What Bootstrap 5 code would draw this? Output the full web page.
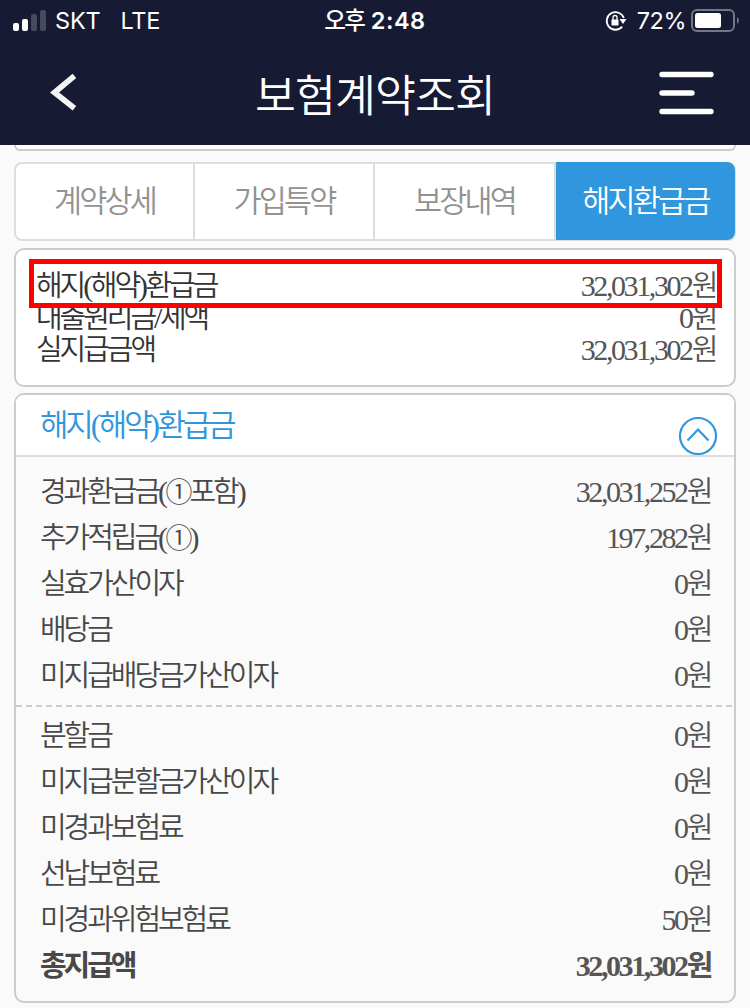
<!DOCTYPE html>
<html lang="ko">
<head>
<meta charset="utf-8">
<meta name="viewport" content="width=device-width, initial-scale=1">
<title>보험계약조회</title>
<link href="https://cdn.jsdelivr.net/npm/bootstrap@5.3.0/dist/css/bootstrap.min.css" rel="stylesheet">
<style>
  body { background: #fafafa; color: #444; height: 1008px; overflow: hidden; font-family: "Liberation Serif", "Noto Sans CJK KR", sans-serif; }
  .topbar { background: #161b33; height: 145px; }
  .status { height: 41px; font: 23.5px/41px Inter, "Noto Sans CJK KR", sans-serif; padding: 0 11px 0 13px; }
  .carrier { margin-left: 8px; letter-spacing: -.2px; }
  .clock { font-weight: 600; letter-spacing: .5px; }
  .clock b { font-weight: 500; letter-spacing: -1.6px; }
  .battery-text { margin: 0 5px 0 8px; letter-spacing: -.5px; }
  .titlebar { height: 104px; padding: 0 36px 0 50px; }
  .titlebar h1 { font: 350 44.5px/62px "Noto Sans CJK KR", sans-serif; letter-spacing: -.9px; }
  .content { padding: 0 14px; }
  .panel { border: 2px solid #ccc; border-radius: 10px; background: #fff; }
  .stub { height: 6px; border-top: 0; border-radius: 0 0 8px 8px; margin-bottom: 11px; }
  .tabs { height: 79px; border: 2px solid #ddd; border-radius: 8px; background: #fff; font: 350 30.5px/70px "Noto Sans CJK KR", sans-serif; letter-spacing: -2.8px; color: #929292; margin-bottom: 7px; }
  .tabs a { color: inherit; text-decoration: none; text-align: center; width: 179px; border-right: 2px solid #ddd; }
  .tabs a:nth-child(2) { width: 180px; }
  .tabs a:nth-child(3) { width: 181px; }
  .tabs a.on { background: #3096dd; color: #fff; border: 0; margin: -2px -1px -1px 0; line-height: 74px; width: 179px; border-radius: 0 8px 8px 0; }
  .summary { height: 139px; padding: 19px 19px 0 20px; margin-bottom: 6px; }
  .line { font-size: 30px; font-weight: 350; letter-spacing: -2.4px; white-space: nowrap; }
  .ko { font-family: "Noto Sans CJK KR", sans-serif; font-size: 29px; letter-spacing: -3.08px; }
  .line, .line .ko { line-height: 1; }
  .summary .line { height: 32px; }
  .name { color: #333; }
  .amount { color: #555; margin-right: -1px; }
  .amount .ko { letter-spacing: -2.4px; }
  .circ { font-family: "Noto Sans CJK KR", sans-serif; font-size: 27px; letter-spacing: -3.2px; }
  .mark-box { position: absolute; left: 13px; top: 9px; width: 693px; height: 49px; border: 5px solid #f00; }
  .detail { height: 610px; background: #fafafa; }
  .detail-head { height: 62px; background: #fff; border-bottom: 2px solid #ddd; border-radius: 8px 8px 0 0; padding: 0 16px 0 24px; color: #3096dd; }
  .detail-head .line { font-size: 31.5px; margin-top: 12px; }
  .detail-head .ko { font-size: 31px; letter-spacing: -3.2px; }
  .group { padding: 18px 24px 0 24px; height: 248px; }
  .group .line { height: 46px; }
  .group .name { color: #484848; }
  .group + .group, .dash + .group { padding-top: 12px; }
  .dash { display: block; height: 2px; }
  .group .total { font-weight: 700; }
</style>
</head>
<body>
<header class="topbar text-white">
  <div class="status d-flex align-items-center position-relative">
    <svg width="34" height="22" viewBox="0 0 34 22"><g fill="#fff"><rect y="13" width="6" height="8" rx="2"/><rect x="9" y="9" width="6" height="12" rx="2"/></g><g fill="#464a5e"><rect x="18" y="4" width="6" height="17" rx="2"/><rect x="27" y="0" width="6" height="21" rx="2"/></g></svg>
    <span class="carrier">SKT</span><span class="carrier ms-3 ps-1">LTE</span>
    <span class="clock position-absolute start-50 translate-middle-x"><b>오후</b> 2:48</span>
    <svg class="ms-auto" width="24" height="22" viewBox="0 0 24 22" fill="none"><path d="M17.2 16.7A8.800 8.800 0 1 1 18.800 8" stroke="#fff" stroke-width="1.800"/><path d="M14.500 9h7l-3.500 5z" fill="#fff"/><rect x="6.500" y="9.500" width="7" height="6" rx=".8" fill="#fff"/><path d="M8 10V7.500a2 2 0 0 1 4 0V10" stroke="#fff" stroke-width="1.300"/></svg>
    <span class="battery-text">72%</span>
    <svg width="48" height="24" viewBox="0 0 48 24"><rect x="1" y="1" width="42" height="21" rx="5" fill="none" stroke="#737685" stroke-width="2"/><rect x="4" y="4" width="26" height="15" rx="2.500" fill="#fff"/><path d="M46 8q4 3.500 0 7z" fill="#737685"/></svg>
  </div>
  <div class="titlebar d-flex align-items-center justify-content-between position-relative">
    <svg width="28" height="38" viewBox="0 0 28 40"><path d="M25 2 4 19.500 25 36" fill="none" stroke="#f4f4f4" stroke-width="6"/></svg>
    <h1 class="m-0 position-absolute start-50 translate-middle-x">보험계약조회</h1>
    <svg width="55" height="44" viewBox="0 0 55 44" stroke="#fff" stroke-width="5.400" stroke-linecap="round"><path d="M3 3.500H52M3 22H33M3 40.500H52"/></svg>
  </div>
</header>
<main class="content">
  <div class="panel stub"></div>
  <nav class="tabs d-flex"><a href="#">계약상세</a><a href="#">가입특약</a><a href="#">보장내역</a><a class="on" href="#">해지환급금</a></nav>
  <section class="panel summary position-relative">
    <div class="line d-flex justify-content-between"><span class="name"><span class="ko">해지</span>(<span class="ko">해약</span>)<span class="ko">환급금</span></span><span class="amount">32,031,302<span class="ko">원</span></span></div>
    <div class="line d-flex justify-content-between"><span class="name"><span class="ko">대출원리금</span>/<span class="ko">세액</span></span><span class="amount">0<span class="ko">원</span></span></div>
    <div class="line d-flex justify-content-between"><span class="name"><span class="ko">실지급금액</span></span><span class="amount">32,031,302<span class="ko">원</span></span></div>
    <div class="mark-box"></div>
  </section>
  <section class="panel detail">
    <div class="detail-head d-flex justify-content-between">
      <div class="line"><span class="ko">해지</span>(<span class="ko">해약</span>)<span class="ko">환급금</span></div>
      <svg class="align-self-end" width="40" height="40" viewBox="0 0 40 40" fill="none" stroke="#3096dd" stroke-width="2.200"><circle cx="20" cy="21" r="18"/><path d="m9.500 25.500 10.500-11 10.500 11"/></svg>
    </div>
    <div class="group">
      <div class="line d-flex justify-content-between"><span class="name"><span class="ko">경과환급금</span>(<span class="circ">①</span><span class="ko">포함</span>)</span><span class="amount">32,031,252<span class="ko">원</span></span></div>
      <div class="line d-flex justify-content-between"><span class="name"><span class="ko">추가적립금</span>(<span class="circ">①</span>)</span><span class="amount">197,282<span class="ko">원</span></span></div>
      <div class="line d-flex justify-content-between"><span class="name"><span class="ko">실효가산이자</span></span><span class="amount">0<span class="ko">원</span></span></div>
      <div class="line d-flex justify-content-between"><span class="name"><span class="ko">배당금</span></span><span class="amount">0<span class="ko">원</span></span></div>
      <div class="line d-flex justify-content-between"><span class="name"><span class="ko">미지급배당금가산이자</span></span><span class="amount">0<span class="ko">원</span></span></div>
    </div>
    <svg class="dash" width="100%" height="2"><path d="M0 1H718" stroke="#ccc" stroke-width="2" stroke-dasharray="6 4"/></svg>
    <div class="group">
      <div class="line d-flex justify-content-between"><span class="name"><span class="ko">분할금</span></span><span class="amount">0<span class="ko">원</span></span></div>
      <div class="line d-flex justify-content-between"><span class="name"><span class="ko">미지급분할금가산이자</span></span><span class="amount">0<span class="ko">원</span></span></div>
      <div class="line d-flex justify-content-between"><span class="name"><span class="ko">미경과보험료</span></span><span class="amount">0<span class="ko">원</span></span></div>
      <div class="line d-flex justify-content-between"><span class="name"><span class="ko">선납보험료</span></span><span class="amount">0<span class="ko">원</span></span></div>
      <div class="line d-flex justify-content-between"><span class="name"><span class="ko">미경과위험보험료</span></span><span class="amount">50<span class="ko">원</span></span></div>
      <div class="line total d-flex justify-content-between"><span class="name"><span class="ko">총지급액</span></span><span class="amount">32,031,302<span class="ko">원</span></span></div>
    </div>
  </section>
</main>
<script src="https://cdn.jsdelivr.net/npm/bootstrap@5.3.0/dist/js/bootstrap.bundle.min.js"></script>
</body>
</html>
